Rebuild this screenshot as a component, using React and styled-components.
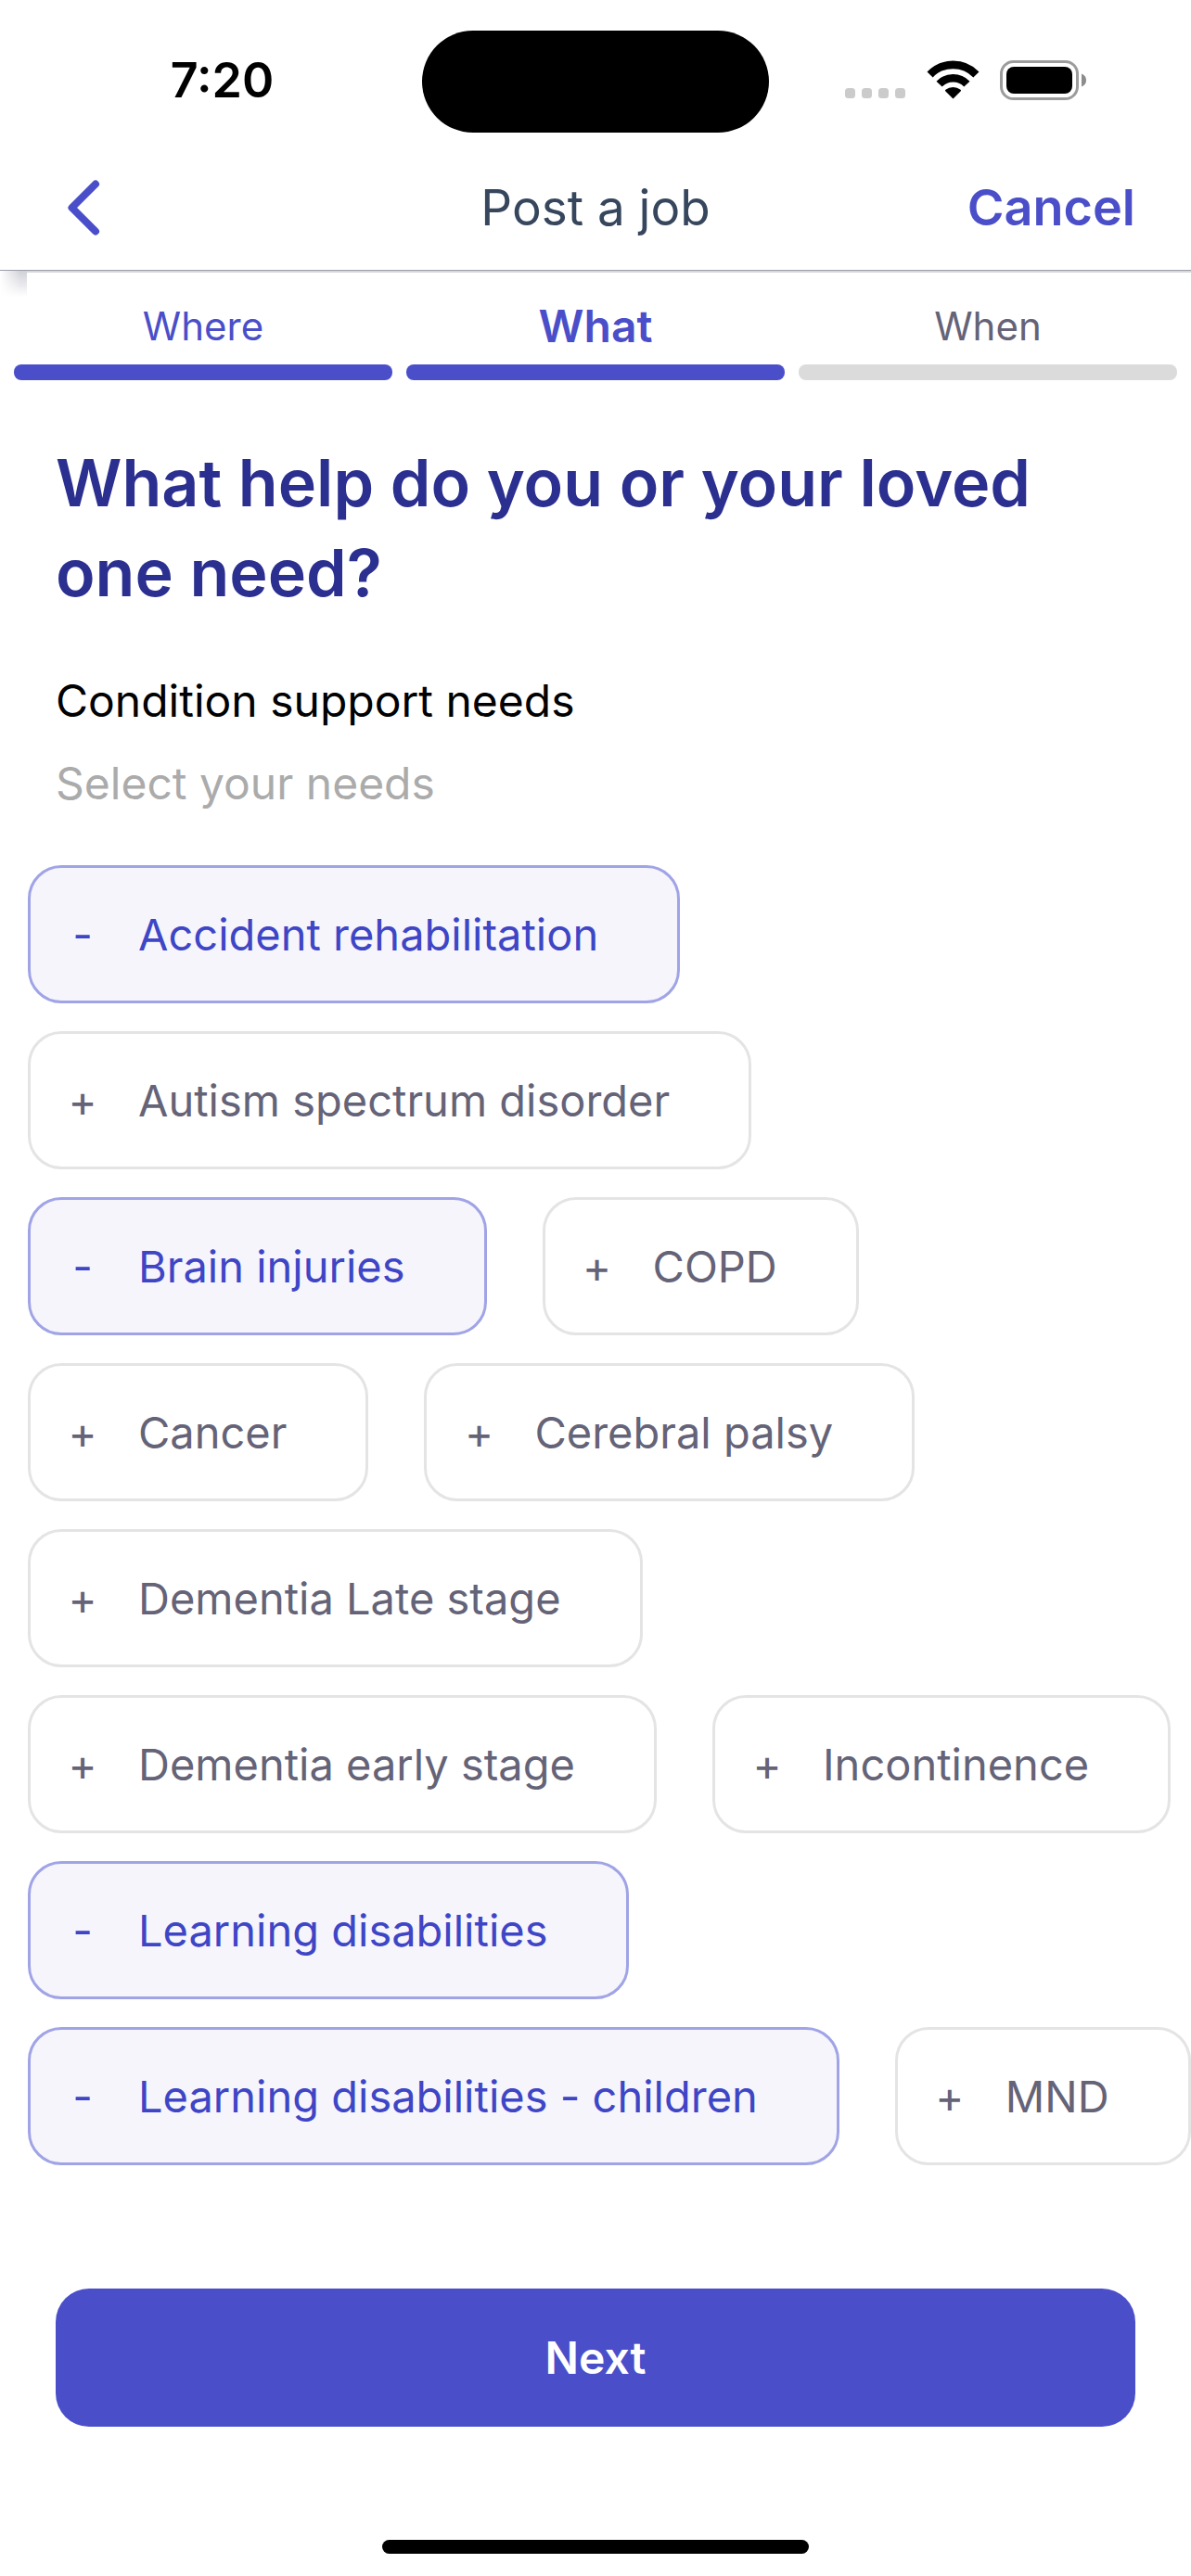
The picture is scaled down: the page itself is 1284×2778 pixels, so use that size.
import React, { useState } from "react";
import styled, { createGlobalStyle } from "styled-components";

const color = {
  primary: "#4a4fc9",
  heading: "#2b2f8f",
  title: "#36465d",
  muted: "#656377",
  hint: "#ababab",
  line: "#e4e4e4",
  track: "#dbdbdb",
  chipOn: "#f6f5fc",
  chipOnLine: "#a0a4e6",
  chipOnText: "#3f46c6",
};

const GlobalStyle = createGlobalStyle`
  *, *::before, *::after { box-sizing: border-box; }
  body {
    margin: 0;
    background: #fff;
    color: #000;
    font-family: Inter, "Liberation Sans", sans-serif;
  }
  button { font: inherit; border: 0; background: none; cursor: pointer; }
`;

const Screen = styled.div`
  display: flex;
  flex-direction: column;
  min-height: 100vh;
  overflow: hidden;
`;

const StatusBar = styled.div`
  display: grid;
  grid-template-columns: 1fr 374px 1fr;
  align-items: center;
  padding-top: 33px;
`;

const Clock = styled.time`
  padding: 0 0 2px 24px;
  text-align: center;
  font-size: 52px;
  line-height: 60px;
  font-weight: 600;
`;

const Island = styled.div`
  height: 110px;
  border-radius: 55px;
  background: #000;
`;

const Indicators = styled.div`
  display: flex;
  align-items: center;
  justify-content: flex-end;
  padding: 0 112px 4px 0;
  gap: 22px;
`;

const NavBar = styled.header`
  position: relative;
  display: grid;
  grid-template-columns: 1fr auto 1fr;
  align-items: center;
  height: 149px;
  padding: 14px 60px 0;
  border-bottom: 1px solid #9c9fa8;
  box-shadow: 0 2px 0 #d6d7dc;

  &::after {
    content: "";
    position: absolute;
    top: calc(100% + 1px);
    left: 0;
    width: 29px;
    height: 28px;
    background: linear-gradient(to right, #fff, transparent 22px),
      linear-gradient(#d0d0d8, #fff);
  }
`;

const BackButton = styled.button`
  justify-self: start;
  display: flex;
  padding: 0 12px;
`;

const Title = styled.h1`
  margin: 0;
  font-size: 53px;
  line-height: 72px;
  font-weight: 400;
  color: ${color.title};
`;

const CancelButton = styled.button`
  justify-self: end;
  padding: 0;
  font-size: 54px;
  line-height: 72px;
  font-weight: 600;
  color: ${color.primary};
`;

const Steps = styled.ol`
  display: grid;
  grid-template-columns: repeat(3, 1fr);
  gap: 15px;
  margin: 0;
  padding: 28px 15px 0;
  list-style: none;
`;

const Step = styled.li`
  display: flex;
  flex-direction: column;
  gap: 9px;
  text-align: center;
  font-size: ${(p) => (p.$current ? 48 : 42)}px;
  line-height: 64px;
  font-weight: ${(p) => (p.$current ? 600 : 400)};
  color: ${(p) => (p.$reached ? color.primary : color.muted)};

  &::after {
    content: "";
    height: 17px;
    border-radius: 8px;
    background: ${(p) => (p.$reached ? color.primary : color.track)};
  }
`;

const Intro = styled.section`
  padding: 62px 60px 0;
`;

const Question = styled.h2`
  margin: 0;
  font-size: 70px;
  line-height: 97px;
  font-weight: 600;
  color: ${color.heading};
`;

const GroupTitle = styled.h3`
  margin: 60px 0 0;
  font-size: 48px;
  line-height: 60px;
  font-weight: 400;
`;

const Hint = styled.p`
  margin: 29px 0 0;
  font-size: 48px;
  line-height: 60px;
  color: ${color.hint};
`;

const Chips = styled.div`
  display: flex;
  flex-wrap: wrap;
  gap: 30px 60px;
  padding: 58px 0 0 30px;
`;

const Chip = styled.button`
  display: flex;
  align-items: center;
  height: 149px;
  padding: 0 85px 0 30px;
  border: 3px solid ${(p) => (p.$on ? color.chipOnLine : color.line)};
  border-radius: 36px;
  background: ${(p) => (p.$on ? color.chipOn : "#fff")};
  color: ${(p) => (p.$on ? color.chipOnText : color.muted)};
  font-size: 47px;
  line-height: 60px;
  white-space: nowrap;
`;

const Sign = styled.span`
  width: 52px;
  margin-right: 34px;
  text-align: center;
`;

const Footer = styled.footer`
  display: flex;
  flex-direction: column;
  align-items: center;
  gap: 122px;
  margin-top: auto;
  padding: 60px 60px 24px;
`;

const NextButton = styled.button`
  width: 100%;
  height: 149px;
  border-radius: 36px;
  background: ${color.primary};
  color: #fff;
  font-size: 48px;
  line-height: 60px;
  font-weight: 600;
`;

const HomeIndicator = styled.div`
  width: 460px;
  height: 15px;
  border-radius: 8px;
  background: #000;
`;

const STEPS = [
  { label: "Where", reached: true },
  { label: "What", reached: true, current: true },
  { label: "When" },
];

const NEEDS = [
  "Accident rehabilitation",
  "Autism spectrum disorder",
  "Brain injuries",
  "COPD",
  "Cancer",
  "Cerebral palsy",
  "Dementia Late stage",
  "Dementia early stage",
  "Incontinence",
  "Learning disabilities",
  "Learning disabilities - children",
  "MND",
];

function SignalIcon() {
  return (
    <svg width="66" height="42" viewBox="0 0 66 42" aria-hidden="true">
      {[0, 18, 36, 54].map((x) => (
        <rect key={x} x={x} y="30" width="11" height="11" rx="3.5" fill="#cbcbcb" />
      ))}
    </svg>
  );
}

function WifiIcon() {
  return (
    <svg width="57" height="42" viewBox="0 0 57 42" aria-hidden="true">
      <g fill="none" stroke="#000" strokeWidth="8.6">
        <path d="M3.6 15.4A34.7 34.7 0 0 1 53.4 15.4" />
        <path d="M13.6 25.6A20.6 20.6 0 0 1 43.4 25.6" />
      </g>
      <path d="M28.5 41.5 20.2 33.2Q19.6 32.4 20.4 31.8A13 13 0 0 1 36.6 31.8Q37.4 32.4 36.8 33.2Z" />
    </svg>
  );
}

function BatteryIcon() {
  return (
    <svg width="94" height="43" viewBox="0 0 94 43" aria-hidden="true">
      <rect x="1.5" y="1.5" width="82" height="40" rx="13" fill="none" stroke="#9c9c9c" strokeWidth="3" />
      <rect x="7" y="7" width="71" height="29" rx="8" />
      <path d="M88 14.5Q93 16.500 93 21.500T88 28.500Z" fill="#8c8c8c" />
    </svg>
  );
}

function ChevronLeft() {
  return (
    <svg width="36" height="60" viewBox="0 0 36 60" fill="none" aria-hidden="true">
      <path d="M31 4.500 5.500 30 31 55.500" stroke={color.primary} strokeWidth="8" strokeLinecap="round" strokeLinejoin="round" />
    </svg>
  );
}

export default function App() {
  const [selected, setSelected] = useState(
    () =>
      new Set([
        "Accident rehabilitation",
        "Brain injuries",
        "Learning disabilities",
        "Learning disabilities - children",
      ])
  );

  const toggle = (need) =>
    setSelected((prev) => {
      const next = new Set(prev);
      if (!next.delete(need)) next.add(need);
      return next;
    });

  return (
    <Screen>
      <GlobalStyle />
      <StatusBar>
        <Clock>7:20</Clock>
        <Island />
        <Indicators>
          <SignalIcon />
          <WifiIcon />
          <BatteryIcon />
        </Indicators>
      </StatusBar>

      <NavBar>
        <BackButton type="button" aria-label="Back">
          <ChevronLeft />
        </BackButton>
        <Title>Post a job</Title>
        <CancelButton type="button">Cancel</CancelButton>
      </NavBar>

      <main>
        <Steps>
          {STEPS.map((s) => (
            <Step key={s.label} $reached={s.reached} $current={s.current}>
              {s.label}
            </Step>
          ))}
        </Steps>

        <Intro>
          <Question>What help do you or your loved one need?</Question>
          <GroupTitle id="needs">Condition support needs</GroupTitle>
          <Hint>Select your needs</Hint>
        </Intro>

        <Chips role="group" aria-labelledby="needs">
          {NEEDS.map((need) => {
            const on = selected.has(need);
            return (
              <Chip key={need} type="button" $on={on} aria-pressed={on} onClick={() => toggle(need)}>
                <Sign>{on ? "-" : "+"}</Sign>
                {need}
              </Chip>
            );
          })}
        </Chips>
      </main>

      <Footer>
        <NextButton type="button">Next</NextButton>
        <HomeIndicator />
      </Footer>
    </Screen>
  );
}
